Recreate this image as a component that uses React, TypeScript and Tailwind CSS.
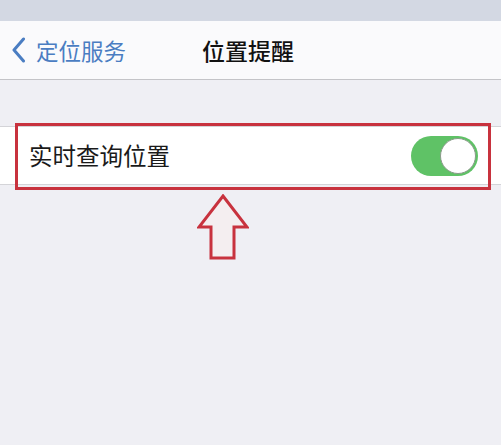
export default function App() {
  return (
    <div
      className="w-[501px] h-[445px] bg-[#efeff4] flex flex-col overflow-hidden"
      style={{ fontFamily: '"Noto Sans CJK SC", "Noto Sans", sans-serif' }}
    >
      {/* status strip */}
      <div className="h-[21px] bg-[#d3d8e3]" />

      {/* nav bar */}
      <div className="h-[59px] bg-[#fafafc] border-b border-[#c4c4c8] flex items-center relative">
        <div className="flex items-center pl-[11px] text-[#4a7dc2]">
          <svg width="15" height="26" viewBox="0 0 15 26" fill="none">
            <path d="M12.5 2 L3 13 L12.5 24" stroke="#4a7dc2" strokeWidth="3" strokeLinecap="round" strokeLinejoin="round" />
          </svg>
          <span className="ml-[10px] text-[22.5px] leading-none">定位服务</span>
        </div>
        <div className="absolute left-[202px] top-0 h-full flex items-center text-[23px] font-medium text-[#111] leading-none">
          位置提醒
        </div>
      </div>

      {/* row section */}
      <div className="mt-[46px] relative">
        <div className="h-[59px] bg-white border-y border-[#d4d4d8] flex items-center justify-between pl-[29px] pr-[23px]">
          <span className="text-[23.5px] text-[#1a1a1a] leading-none">实时查询位置</span>
          <div className="w-[67px] h-[40px] rounded-full bg-[#5fc266] flex items-center justify-end p-[2px]">
            <div className="w-[36px] h-[36px] rounded-full bg-white border border-[#8a9a8a]" />
          </div>
        </div>
        {/* highlight box */}
        <div className="absolute left-[15px] top-[-3px] w-[476px] h-[67px] border-[3px] border-[#c8323e]" />
      </div>

      {/* arrow */}
      <div className="pl-[197px] mt-[9px]">
        <svg width="52" height="66" viewBox="0 0 52 66" fill="none">
          <path
            d="M26 2 L50 33 L37 33 L37 64 L14 64 L14 33 L2 33 Z"
            stroke="#c8323e"
            strokeWidth="3"
            strokeLinejoin="miter"
            fill="#f4eef0"
          />
        </svg>
      </div>
    </div>
  );
}
